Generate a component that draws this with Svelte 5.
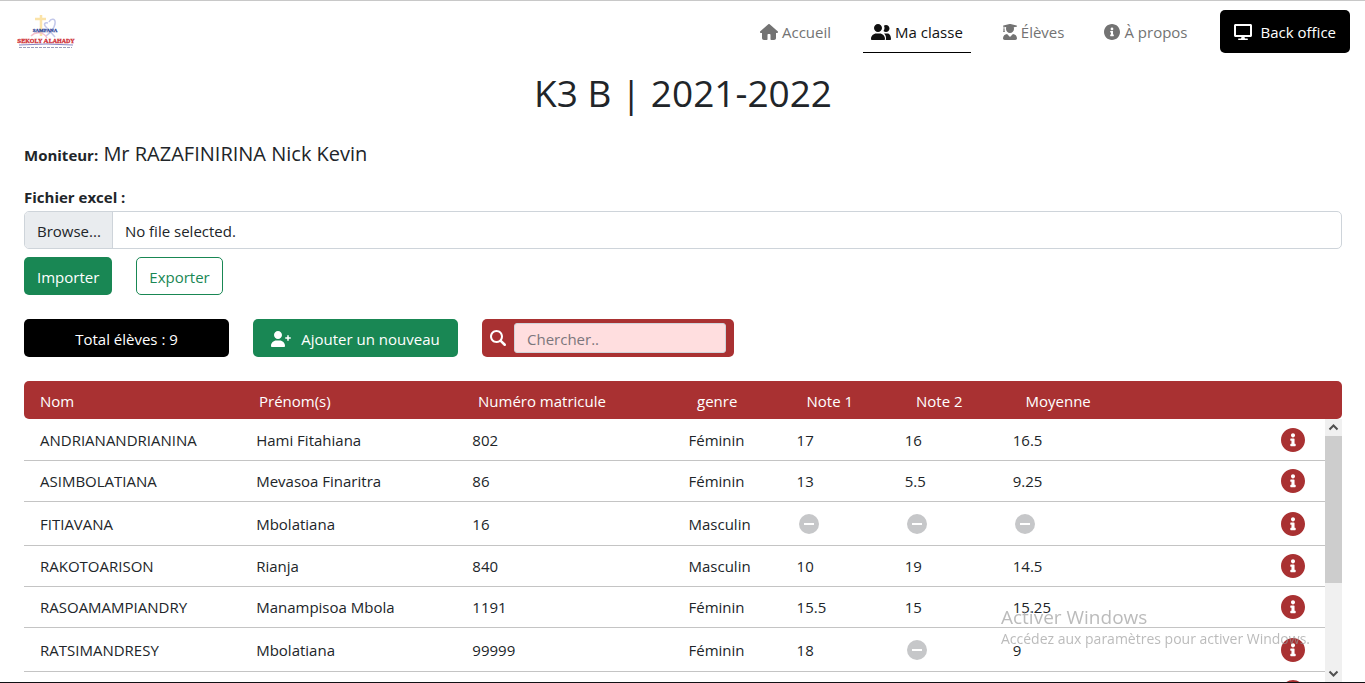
<script>
  const students = [
    { last: 'ANDRIANANDRIANINA', first: 'Hami Fitahiana', id: '802', gender: 'Féminin', marks: ['17', '16', '16.5'] },
    { last: 'ASIMBOLATIANA', first: 'Mevasoa Finaritra', id: '86', gender: 'Féminin', marks: ['13', '5.5', '9.25'] },
    { last: 'FITIAVANA', first: 'Mbolatiana', id: '16', gender: 'Masculin', marks: [null, null, null] },
    { last: 'RAKOTOARISON', first: 'Rianja', id: '840', gender: 'Masculin', marks: ['10', '19', '14.5'] },
    { last: 'RASOAMAMPIANDRY', first: 'Manampisoa Mbola', id: '1191', gender: 'Féminin', marks: ['15.5', '15', '15.25'] },
    { last: 'RATSIMANDRESY', first: 'Mbolatiana', id: '99999', gender: 'Féminin', marks: ['18', null, '9'] },
    { last: '', first: '', id: '', gender: '', marks: ['', '', ''] }
  ];
</script>

{#snippet info(size)}
  <svg width={size} height={size} viewBox="8 8 496 496" fill="currentColor" aria-hidden="true">
    <path d="M256 8C119 8 8 119 8 256s111 248 248 248 248-111 248-248S393 8 256 8zm0 110c23.200 0 42 18.800 42 42s-18.800 42-42 42-42-18.800-42-42 18.800-42 42-42zm56 254c0 6.600-5.400 12-12 12h-88c-6.600 0-12-5.400-12-12v-24c0-6.600 5.400-12 12-12h12v-64h-12c-6.600 0-12-5.400-12-12v-24c0-6.600 5.400-12 12-12h64c6.600 0 12 5.400 12 12v100h12c6.600 0 12 5.400 12 12v24z" />
  </svg>
{/snippet}

<div class="page">
  <header>
    <a class="logo" href="#accueil" aria-label="Sampana Sekoly Alahady">
      <svg width="60" height="42" viewBox="0 0 60 42">
        <path d="M25 5v21M19 9h11" stroke="#fbe3a8" stroke-width="2.500" fill="none" />
        <path d="M33 12c2-4 7-4 6 2-1 5-5 9-9 12M32 13c-3-1-5 1-2 4l9 10" stroke="#c3c8ea" stroke-width="1.500" fill="none" />
        <path d="M15 26c5-5 13-4 16 2" stroke="#f6c0cb" stroke-width="1.500" fill="none" />
        <text x="29" y="22" text-anchor="middle" font-size="5" fill="#34499a" stroke="#34499a" stroke-width=".3">SAMPANA</text>
        <text x="30" y="33" text-anchor="middle" font-size="6" fill="#cf2f36" stroke="#cf2f36" stroke-width=".3"><tspan font-size="7">S</tspan>EKOLY <tspan font-size="7">A</tspan>LAHADY</text>
        <path d="M3 35q27-2 54 0" stroke="#8a86c4" fill="none" />
        <path d="M3 37.500h53" stroke="#9a9dbb" stroke-dasharray="3 1" fill="none" />
      </svg>
    </a>
    <nav>
      <a href="#accueil">
        <svg width="18" height="16" viewBox="0 0 576 512" fill="currentColor" aria-hidden="true"><path d="M575.800 255.500c0 18-15 32.100-32 32.100h-32l.7 160.200c0 35-28 64-64 64H360c-18 0-24-12-24-24V352c0-18-14-32-32-32h-32c-18 0-32 14-32 32v136c0 12-8 24-24 24h-88c-36 0-64-28-64-64V287.600H32c-18 0-32-14-32-32.100 0-9 3-17 10-24L266.400 8c7-7 15-8 22-8s15 2 21 7l255.400 224.500c8 7 12 15 11 24z" /></svg>
        Accueil
      </a>
      <a href="#classe" class="active" aria-current="page">
        <svg width="20" height="16" viewBox="0 0 640 512" fill="currentColor" aria-hidden="true"><path d="M224 256c71 0 128-57 128-128S295 0 224 0 96 57 96 128s57 128 128 128zm51 48H173C77 304 0 381 0 477c0 19 16 35 35 35h378c19 0 35-16 35-35 0-96-77-173-173-173zM480 256c62 0 112-50 112-112S542 32 480 32c-26 0-49 9-68 23 13 21 20 46 20 73 0 36-12 69-32 96 20 20 48 32 80 32zm53 48h-88c-9 0-18 1-27 3 38 35 62 86 62 143 0 22 0 42-8 62h136c18 0 32-14 32-32 0-97-48-176-107-176z" /></svg>
        Ma classe
      </a>
      <a href="#eleves">
        <svg width="14" height="16" viewBox="0 0 448 512" fill="currentColor" aria-hidden="true"><path d="M319 320l-95 96-95-96C56 323 0 384 0 457c0 30 25 55 55 55h338c30 0 55-25 55-55 0-73-56-134-129-137zM14 84l6 1v63c-7 4-12 11-12 20 0 8 4 15 11 19L4 245c-2 7 2 11 6 11h44c4 0 8-4 6-11l-15-58c7-4 11-11 11-19 0-9-5-16-12-20V91l60 15c-5 17-8 35-8 54 0 71 57 128 128 128s128-57 128-128c0-19-3-37-9-54l91-22c19-5 19-31 0-36L240 3c-10-3-22-3-32 0L14 48c-18 5-18 31 0 36z" /></svg>
        Élèves
      </a>
      <a href="#propos">{@render info(16)} À propos</a>
      <a class="office" href="#office">
        <svg width="18" height="16" viewBox="0 0 576 512" fill="currentColor" aria-hidden="true"><path d="M528 0H48C21 0 0 21 0 48v320c0 27 21 48 48 48h192l-16 48h-72c-13 0-24 11-24 24s11 24 24 24h272c13 0 24-11 24-24s-11-24-24-24h-72l-16-48h192c27 0 48-21 48-48V48c0-27-21-48-48-48zm-16 352H64V64h448v288z" /></svg>
        Back office
      </a>
    </nav>
  </header>

  <main>
    <h1>K3 B | 2021-2022</h1>
    <p class="teacher"><b>Moniteur:</b> Mr RAZAFINIRINA Nick Kevin</p>

    <label class="file-label" for="excel">Fichier excel :</label>
    <div class="file">
      <span class="browse">Browse...</span>
      <span class="chosen">No file selected.</span>
      <input id="excel" type="file" />
    </div>
    <div class="bar">
      <button class="btn green">Importer</button>
      <button class="btn outline">Exporter</button>
    </div>

    <div class="bar tools">
      <div class="btn total">Total élèves : 9</div>
      <button class="btn green add">
        <svg width="20" height="16" viewBox="0 0 640 512" fill="currentColor" aria-hidden="true"><path d="M224 256c71 0 128-57 128-128S295 0 224 0 96 57 96 128s57 128 128 128zm51 48H173C77 304 0 381 0 477c0 19 16 35 35 35h378c19 0 35-16 35-35 0-96-77-173-173-173zM616 200h-48v-48c0-13-11-24-24-24s-24 11-24 24v48h-48c-13 0-24 11-24 24s11 24 24 24h48v48c0 13 11 24 24 24s24-11 24-24v-48h48c13 0 24-11 24-24s-11-24-24-24z" /></svg>
        Ajouter un nouveau
      </button>
      <label class="search">
        <svg width="16" height="16" viewBox="0 0 512 512" fill="currentColor" aria-hidden="true"><path d="M500 443L381 324c22-33 35-72 35-116C416 93 323 0 208 0S0 93 0 208s93 208 208 208c43 0 83-13 116-35l119 119c8 8 18 12 28 12s21-4 29-12c16-16 16-41 0-57zM64 208c0-79 65-144 144-144s144 65 144 144-65 144-144 144S64 287 64 208z" /></svg>
        <input type="search" placeholder="Chercher.." aria-label="Chercher" />
      </label>
    </div>

    <div class="list">
      <table>
        <thead>
          <tr>
            <th>Nom</th><th>Prénom(s)</th><th>Numéro matricule</th><th>genre</th>
            <th>Note 1</th><th>Note 2</th><th>Moyenne</th><th></th>
          </tr>
        </thead>
        <tbody>
          {#each students as s}
            <tr class:missing={s.marks.includes(null)}>
              <td>{s.last}</td><td>{s.first}</td><td>{s.id}</td><td>{s.gender}</td>
              {#each s.marks as mark}
                <td>
                  {#if mark === null}
                    <svg class="none" width="24" height="24" viewBox="0 0 24 24" aria-label="Aucune note"><circle cx="12" cy="12" r="10" fill="#c6c7c9" /><path d="M7 12h10" stroke="#fff" stroke-width="2" /></svg>
                  {:else}{mark}{/if}
                </td>
              {/each}
              <td class="action"><button aria-label="Détails">{@render info(24)}</button></td>
            </tr>
          {/each}
        </tbody>
      </table>
      <div class="scroll" aria-hidden="true">
        <svg width="17" height="17" viewBox="0 0 17 17"><path d="M4.500 10.500l4-4 4 4" /></svg>
        <div class="track"><div class="thumb"></div></div>
        <svg width="17" height="17" viewBox="0 0 17 17"><path d="M4.500 6.500l4 4 4-4" /></svg>
      </div>
    </div>
  </main>

  <aside>
    <strong>Activer Windows</strong>
    <span>Accédez aux paramètres pour activer Windows.</span>
  </aside>
</div>

<style>
  :global(body) { margin: 0; }
  * { box-sizing: border-box; }
  .page {
    height: 100vh;
    display: flex;
    flex-direction: column;
    overflow: hidden;
    border-top: 1px solid #c8c8c8;
    border-bottom: 1px solid #101014;
    background: #fff;
    color: #212529;
    font: 15px/24px "Open Sans", "Noto Sans", sans-serif;
  }
  button, input { font: inherit; }
  header {
    display: flex;
    justify-content: space-between;
    align-items: flex-start;
    padding: 9px 15px 0 16px;
  }
  .logo svg { display: block; font-family: "Liberation Serif", serif; font-weight: bold; }
  nav { display: flex; gap: 24px; }
  nav a {
    display: flex;
    align-items: center;
    gap: 4px;
    height: 43px;
    padding: 2px 8px 0;
    color: #737373;
    text-decoration: none;
    border-bottom: 1px solid transparent;
  }
  nav a.active { color: #111; border-color: #000; }
  nav .office {
    gap: 9px;
    padding: 0 14px;
    border: 0;
    border-radius: 5px;
    background: #000;
    color: #fff;
  }
  main {
    flex: 1;
    min-height: 0;
    display: flex;
    flex-direction: column;
    padding: 0 23px 0 24px;
  }
  h1 { margin: 16px 0 0; text-align: center; font-size: 37px; line-height: 48px; font-weight: 400; }
  .teacher { margin: 22px 0 0; font-size: 20px; line-height: 30px; }
  .teacher b { font-size: 15px; }
  .file-label { margin-top: 15px; font-weight: 700; }
  .file {
    position: relative;
    display: flex;
    height: 38px;
    margin-top: 2px;
    border: 1px solid #ced4da;
    border-radius: 5px;
    overflow: hidden;
    line-height: 38px;
  }
  .browse { padding: 0 11px 0 12px; background: #e9ecef; border-right: 1px solid #ced4da; }
  .chosen { padding: 0 12px; }
  .file input { position: absolute; inset: 0; width: 100%; opacity: 0; }
  .bar { display: flex; gap: 24px; margin-top: 8px; }
  .tools { margin-top: 24px; }
  .btn {
    display: flex;
    align-items: center;
    justify-content: center;
    height: 38px;
    padding: 2px 12px 0;
    border: 1px solid transparent;
    border-radius: 5px;
    color: #fff;
  }
  .green { background: #198754; }
  .outline { background: #fff; border-color: #198754; color: #198754; }
  .total, .add { width: 205px; }
  .total { background: #000; }
  .add { gap: 10px; }
  .search {
    display: flex;
    align-items: center;
    gap: 8px;
    width: 252px;
    height: 38px;
    padding: 0 8px;
    border-radius: 5px;
    background: #a93132;
    color: #fff;
  }
  .search input {
    flex: 1;
    min-width: 0;
    height: 30px;
    padding: 2px 12px 0;
    border: 1px solid #ced4da;
    border-radius: 3px;
    background: #ffdedf;
    color: #212529;
  }
  .search input::placeholder { color: #7c767c; opacity: 1; }
  .list { position: relative; flex: 1; min-height: 0; margin-top: 24px; }
  table { display: flex; flex-direction: column; height: 100%; }
  thead { display: block; border-radius: 5px; background: #a93132; color: #fff; }
  tr {
    display: grid;
    grid-template-columns: 2fr 2fr 2fr 1fr 1fr 1fr 1fr 2fr;
    align-items: center;
    padding-right: 4px;
  }
  thead tr { height: 38px; padding-top: 2px; }
  th, td { min-width: 0; padding: 0 0 0 16px; text-align: left; font-weight: 400; white-space: nowrap; }
  tbody {
    display: block;
    flex: 1;
    min-height: 0;
    margin-right: 17px;
    padding-top: 1px;
    overflow-y: auto;
    scrollbar-width: none;
  }
  tbody tr { height: 41px; border-bottom: 1px solid #c4c4c4; }
  tbody tr.missing { height: 44px; }
  td svg { display: block; }
  .action { display: flex; justify-content: flex-end; padding-right: 16px; }
  .action button { padding: 0; border: 0; background: none; color: #a93132; }
  .scroll {
    position: absolute;
    top: 38px;
    right: 0;
    bottom: 0;
    width: 17px;
    display: flex;
    flex-direction: column;
    background: #f0f0f0;
  }
  .scroll path { fill: none; stroke: #505050; stroke-width: 2; }
  .scroll svg { display: block; }
  .track { flex: 1; }
  .thumb { height: 64%; background: #cdcdcd; }
  aside {
    position: fixed;
    right: 55px;
    bottom: 33px;
    display: flex;
    flex-direction: column;
    color: rgba(150, 150, 150, 0.65);
    font-size: 14px;
    line-height: 22px;
    pointer-events: none;
  }
  aside strong { font-size: 19px; font-weight: 400; }
</style>
